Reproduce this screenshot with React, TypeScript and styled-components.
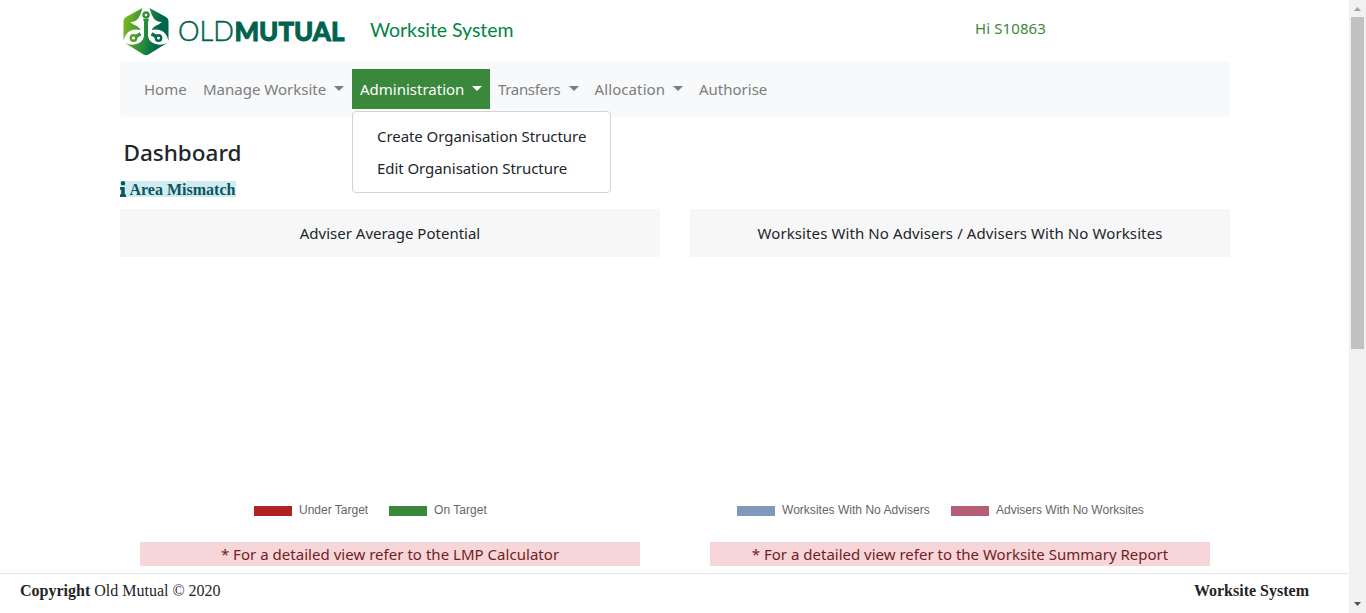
import React from 'react';
import styled, { createGlobalStyle } from 'styled-components';

const Global = createGlobalStyle`
  *, *::before, *::after { box-sizing: border-box; }
  html, body { margin: 0; padding: 0; overflow: hidden; }
  body { background: #fff; color: #212529; font: 15px/24px "Noto Sans", "Open Sans", sans-serif; }
`;

const Screen = styled.div`
  display: flex;
  width: 100%;
  height: 613px;
`;
const Page = styled.div`
  flex: 1;
  min-width: 0;
  display: flex;
  flex-direction: column;
`;
const Container = styled.main`
  width: 1110px;
  height: 573px;
  margin-left: 120px;
`;
const Label = styled.span<{ $ls?: number }>`
  letter-spacing: ${(p) => p.$ls ?? 0}px;
  white-space: nowrap;
`;
const Header = styled.header`
  display: flex;
  height: 61px;
`;
const Logo = styled.svg`
  display: block;
  flex: none;
  width: 230px;
  height: 61px;
`;
const Brand = styled.div`
  width: 625px;
  padding: 18px 0 0 20px;
  color: #008542;
  font: 19.5px/24px Lato, sans-serif;
`;
const Greeting = styled.div`
  padding-top: 16px;
  color: #3c883c;
`;
const Nav = styled.nav`
  display: flex;
  height: 56px;
  padding: 8px 16px;
  border-radius: 4px;
  background: #f8f9fa;
`;
const NavItem = styled.div<{ $w: number; $active?: boolean }>`
  position: relative;
  display: flex;
  align-items: center;
  justify-content: space-between;
  width: ${(p) => p.$w}px;
  height: 40px;
  padding: 0 8px;
  color: ${(p) => (p.$active ? '#fff' : '#7c7d7d')};
  background: ${(p) => (p.$active ? '#3a883b' : 'transparent')};
`;
const Caret = styled.span`
  border: 5px solid transparent;
  border-top-color: currentColor;
  border-bottom: 0;
  margin-top: -1px;
`;
const Menu = styled.div`
  position: absolute;
  z-index: 2;
  top: 42px;
  left: 0;
  width: 259px;
  height: 82px;
  padding: 8px 0;
  border: 1px solid #d3d3d3;
  border-radius: 4px;
  background: #fff;
  color: #212529;
`;
const MenuItem = styled.div`
  height: 32px;
  padding: 4px 24px;
`;
const Title = styled.h4`
  margin: 0;
  padding: 21px 0 0 3.5px;
  height: 64px;
  font-size: 22.5px;
  font-weight: 500;
  line-height: 29px;
`;
const Mismatch = styled.div`
  display: flex;
  width: 115.5px;
  height: 16px;
  background: #d1ecf1;
  color: #0c5460;
  font: bold 16px/18px "Liberation Serif", serif;
`;
const InfoIcon = styled.svg`
  flex: none;
  width: 6px;
  height: 16px;
  margin: 0 4px 0 -0.5px;
`;
const Cards = styled.section`
  display: grid;
  grid-template-columns: 540px 540px;
  gap: 30px;
  margin-top: 12px;
`;
const CardHeader = styled.div`
  height: 48px;
  padding: 12px 0;
  background: #f7f7f7;
  text-align: center;
`;
const Chart = styled.div`
  display: flex;
  align-items: flex-end;
  height: 265px;
  padding-bottom: 5px;
`;
const Legend = styled.div<{ $x: number }>`
  display: flex;
  align-items: center;
  height: 14px;
  padding-left: ${(p) => p.$x}px;
  color: #666;
  font: 12px/14px "Liberation Sans", Arial, sans-serif;
`;
const Entry = styled.div<{ $w: number }>`
  display: flex;
  align-items: center;
  width: ${(p) => p.$w}px;
`;
const Swatch = styled.span<{ $c: string }>`
  flex: none;
  width: 38px;
  height: 10px;
  margin: 2px 7px 0 0;
  background: ${(p) => p.$c};
`;
const Note = styled.div`
  height: 24px;
  margin: 20px 20px 0;
  background: #f7d6d9;
  color: #721c24;
  text-align: center;
`;
const Footer = styled.footer`
  display: flex;
  justify-content: space-between;
  height: 40px;
  padding: 5px 40px 0 20px;
  border-top: 1px solid #e7e7e7;
  font: 16px/24px "Liberation Serif", serif;
`;
const Scrollbar = styled.div`
  display: flex;
  flex-direction: column;
  justify-content: space-between;
  width: 17px;
  background: #f1f1f1;
`;
const Thumb = styled.div`
  flex: none;
  width: 13px;
  height: 332px;
  margin: 0 2px auto;
  background: #c1c1c1;
`;
const Arrow = styled.svg`
  display: block;
  width: 17px;
  height: 17px;
`;

function OldMutualLogo() {
  return (
    <Logo viewBox="120 0 230 61">
      <defs>
        <linearGradient id="leaf" gradientUnits="userSpaceOnUse" x1="124" y1="26" x2="169" y2="34">
          <stop offset="0" stopColor="#7ab51d" />
          <stop offset="0.5" stopColor="#22893f" />
          <stop offset="0.75" stopColor="#00684b" />
          <stop offset="1" stopColor="#006350" />
        </linearGradient>
      </defs>
      <g fill="url(#leaf)">
        <path d="M142.500 8L126 17Q123.500 18.500 123.500 21V41Q125 33 131 30.500Q135 29 140.500 30Q138.500 26 133.500 24.500L130 22Q136 22 138.500 18Q141 14 142.500 8Z" />
        <path d="M149.500 8L166 17Q168.500 18.500 168.500 21V41Q167 33 161 30.500Q157 29 151.500 30Q153.500 26 158.500 24.500L162 22Q156 22 153.500 18Q151 14 149.500 8Z" />
        <path d="M143 19H149L148 22V36Q149 41.500 154 43.500Q160 46 167 43L148.500 54.500Q146 56 143.500 54.500L125 43Q132 46 138 43.500Q143 41.500 144 36V22Z" />
      </g>
      <g fill="none" stroke="url(#leaf)">
        <circle cx="146" cy="15" r="2.500" strokeWidth="2.400" />
        <circle cx="133.500" cy="38" r="2.700" strokeWidth="2.400" />
        <circle cx="158.500" cy="38" r="2.700" strokeWidth="2.400" />
        <path d="M136 36.500L140.500 33.800M156 36.500L151.500 33.800" strokeWidth="3.400" />
      </g>
      <text x="178" y="41" fill="#00624f" stroke="#00624f" strokeWidth="0.500" fontFamily="Lato" fontSize="27" fontWeight="300" textLength="56" lengthAdjust="spacingAndGlyphs">OLD</text>
      <text x="234.500" y="41" fill="#00624f" stroke="#00624f" strokeWidth="0.900" fontFamily="Lato" fontSize="26.500" fontWeight="900" textLength="110" lengthAdjust="spacingAndGlyphs">MUTUAL</text>
    </Logo>
  );
}

export default function App() {
  return (
    <>
      <Global />
      <Screen>
        <Page>
          <Container>
            <Header>
              <OldMutualLogo />
              <Brand><Label $ls={-0.05}>Worksite System</Label></Brand>
              <Greeting><Label $ls={0.1}>Hi S10863</Label></Greeting>
            </Header>
            <Nav>
              <NavItem $w={59}><Label>Home</Label></NavItem>
              <NavItem $w={157}><Label>Manage Worksite</Label><Caret /></NavItem>
              <NavItem $w={138} $active>
                <Label>Administration</Label><Caret />
                <Menu>
                  <MenuItem><Label $ls={-0.06}>Create Organisation Structure</Label></MenuItem>
                  <MenuItem><Label $ls={-0.06}>Edit Organisation Structure</Label></MenuItem>
                </Menu>
              </NavItem>
              <NavItem $w={96.5}><Label $ls={-0.33}>Transfers</Label><Caret /></NavItem>
              <NavItem $w={104.5}><Label $ls={0.1}>Allocation</Label><Caret /></NavItem>
              <NavItem $w={84}><Label>Authorise</Label></NavItem>
            </Nav>
            <Title><Label>Dashboard</Label></Title>
            <Mismatch>
              <InfoIcon viewBox="0 0 192 512" preserveAspectRatio="none">
                <path fill="currentColor" d="M20 424h20V280H20c-11 0-20-9-20-20v-48c0-11 9-20 20-20h112c11 0 20 9 20 20v212h20c11 0 20 9 20 20v48c0 11-9 20-20 20H20c-11 0-20-9-20-20v-48c0-11 9-20 20-20zM96 0a72 72 0 1 0 0 144A72 72 0 0 0 96 0z" />
              </InfoIcon>
              <Label>Area Mismatch</Label>
            </Mismatch>
            <Cards>
              <div>
                <CardHeader><Label>Adviser Average Potential</Label></CardHeader>
                <Chart>
                  <Legend $x={134}>
                    <Entry $w={135}><Swatch $c="#b22222" /><Label>Under Target</Label></Entry>
                    <Entry $w={120}><Swatch $c="#3a883b" /><Label $ls={0.05}>On Target</Label></Entry>
                  </Legend>
                </Chart>
                <Note><Label $ls={0.03}>* For a detailed view refer to the LMP Calculator</Label></Note>
              </div>
              <div>
                <CardHeader><Label $ls={0.1}>Worksites With No Advisers / Advisers With No Worksites</Label></CardHeader>
                <Chart>
                  <Legend $x={47}>
                    <Entry $w={214}><Swatch $c="#8098bb" /><Label $ls={0.02}>Worksites With No Advisers</Label></Entry>
                    <Entry $w={214}><Swatch $c="#b55d75" /><Label>Advisers With No Worksites</Label></Entry>
                  </Legend>
                </Chart>
                <Note><Label>* For a detailed view refer to the Worksite Summary Report</Label></Note>
              </div>
            </Cards>
          </Container>
          <Footer>
            <span><b>Copyright</b> Old Mutual © 2020</span>
            <b>Worksite System</b>
          </Footer>
        </Page>
        <Scrollbar>
          <Arrow viewBox="0 0 17 17"><path d="M5 11L8.500 7L12 11Z" fill="#a3a3a3" /></Arrow>
          <Thumb />
          <Arrow viewBox="0 0 17 17"><path d="M5 6L8.500 10L12 6Z" fill="#505050" /></Arrow>
        </Scrollbar>
      </Screen>
    </>
  );
}
